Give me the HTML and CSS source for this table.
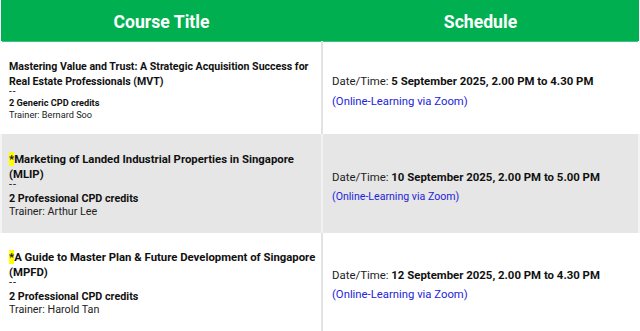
FILE: index.html
```html
<!DOCTYPE html>
<html lang="en">
<head>
<meta charset="utf-8">
<title>Course Schedule</title>
<link rel="stylesheet" href="styles.css">
</head>
<body>
<table class="courses">
  <thead>
    <tr>
      <th class="col-title">Course Title</th>
      <th class="col-sched">Schedule</th>
    </tr>
  </thead>
  <tbody>
    <tr class="row row-a">
      <td class="course">
        <div class="name">Mastering Value and Trust: A Strategic Acquisition Success for Real Estate Professionals (MVT)</div>
        <div class="meta sep">--</div>
        <div class="meta credits">2 Generic CPD credits</div>
        <div class="meta">Trainer: Bernard Soo</div>
      </td>
      <td class="sched">
        <div class="when">Date/Time: <b>5 September 2025, 2.00 PM to 4.30 PM</b></div>
        <div class="mode">(Online-Learning via Zoom)</div>
      </td>
    </tr>
    <tr class="row row-b row-mid alt">
      <td class="course">
        <div class="name"><mark class="star">*</mark>Marketing of Landed Industrial Properties in Singapore (MLIP)</div>
        <div class="meta sep">--</div>
        <div class="meta credits">2 Professional CPD credits</div>
        <div class="meta">Trainer: Arthur Lee</div>
      </td>
      <td class="sched">
        <div class="when">Date/Time: <b>10 September 2025, 2.00 PM to 5.00 PM</b></div>
        <div class="mode">(Online-Learning via Zoom)</div>
      </td>
    </tr>
    <tr class="row row-b row-last">
      <td class="course">
        <div class="name"><mark class="star">*</mark>A Guide to Master Plan &amp; Future Development of Singapore (MPFD)</div>
        <div class="meta sep">--</div>
        <div class="meta credits">2 Professional CPD credits</div>
        <div class="meta">Trainer: Harold Tan</div>
      </td>
      <td class="sched">
        <div class="when">Date/Time: <b>12 September 2025, 2.00 PM to 4.30 PM</b></div>
        <div class="mode">(Online-Learning via Zoom)</div>
      </td>
    </tr>
  </tbody>
</table>
</body>
</html>
```
FILE: styles.css
```css
html, body {
  margin: 0;
  padding: 0;
  background: #ffffff;
}
body {
  font-family: Roboto, "Liberation Sans", Arial, sans-serif;
  color: #222222;
}
.courses {
  width: 640px;
  border-collapse: collapse;
  table-layout: fixed;
}
.courses th {
  background: #00b050;
  color: #ffffff;
  font-size: 17.6px;
  font-weight: 700;
  height: 38px;
  padding: 3px 0 0;
  text-align: center;
  vertical-align: middle;
  border-bottom: 1px solid #3cc57a;
}
.col-title {
  width: 321px;
}
.courses td {
  vertical-align: middle;
  padding: 0 2px 0 9px;
}
.courses td.course {
  border-left: 2px solid #ffffff;
  padding-left: 7px;
}
.courses td.sched {
  padding: 6px 7px 0 9px;
  border-left: 2px solid #e2e2e2;
  border-right: 2px solid #ffffff;
}
.row-a td {
  height: 86px;
}
.courses .row-a td.course {
  padding-top: 4px;
  height: 88px;
}
.row-b td {
  height: 93px;
}
.row-last td {
  height: 92px;
}
.courses .row-b td.course {
  padding-top: 2px;
}
.alt td {
  background: #e6e6e6;
}
.alt td.course {
  border-left-color: #f4f4f4;
}
.alt td.sched {
  border-left-color: #f3f3f3;
  border-right-color: #f4f4f4;
}
.name {
  font-size: 11.35px;
  font-weight: 700;
  line-height: 15px;
  color: #111111;
}
.star {
  background: #ffff00;
  color: #111111;
  padding: 0;
}
.meta {
  font-size: 10.75px;
  line-height: 13px;
  color: #222222;
}
.sep {
  line-height: 6px;
  margin-bottom: 4px;
  letter-spacing: 1px;
  color: #111111;
}
.credits {
  font-weight: 700;
  color: #111111;
}
.row-a .name {
  font-size: 10.6px;
}
.row-a .meta {
  font-size: 9.2px;
  line-height: 12px;
}
.row-a .sep {
  line-height: 5px;
  margin-bottom: 3.5px;
  font-size: 10px;
}
.when {
  font-size: 11.4px;
  line-height: 16px;
  color: #222222;
}
.when b {
  font-weight: 700;
  color: #111111;
}
.mode {
  margin-top: 4px;
  font-size: 11.3px;
  line-height: 16px;
  color: #2323d9;
}
.row-a .mode {
  margin-top: 5px;
}
.row-mid .mode {
  font-size: 10.6px;
  margin-top: 4px;
}
```
